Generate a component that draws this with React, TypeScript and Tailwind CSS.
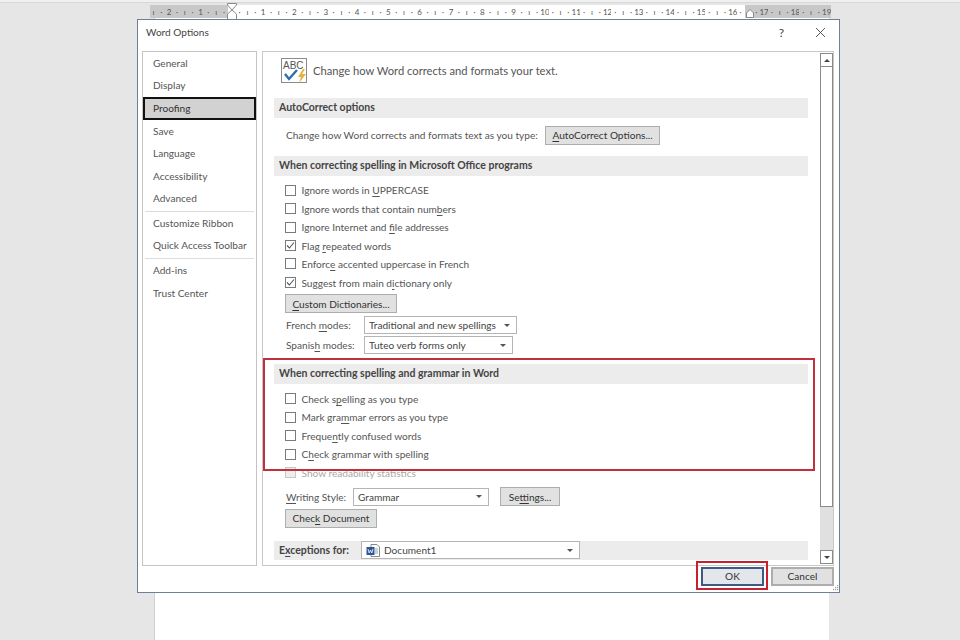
import React from "react";

const U = ({ children }: { children: React.ReactNode }) => <span className="underline underline-offset-2 decoration-1">{children}</span>;

function Check({ label, checked, dim }: { label: React.ReactNode; checked?: boolean; dim?: boolean }) {
  return (
    <div className={`flex h-[18.45px] items-center gap-[5px] whitespace-nowrap pl-[11px] ${dim ? "text-[#a8a8a8]" : ""}`}>
      <span className={`flex h-[11px] w-[11px] items-center justify-center border ${dim ? "border-[#c8c8c8] bg-[#eee]" : "border-[#7a7a7a] bg-white"}`}>
        {checked && (
          <svg width="9" height="9" viewBox="0 0 9 9" fill="none" stroke="#555" strokeWidth="1.1"><path d="M1 4.5 L3.4 7 L8 1.5" /></svg>
        )}
      </span>
      <span className="ml-[0.5px] pt-[1.5px]">{label}</span>
    </div>
  );
}

function Btn({ children, className = "" }: { children: React.ReactNode; className?: string }) {
  return <div className={`flex h-[19px] items-center justify-center whitespace-nowrap border border-[#adadad] bg-[#e1e1e1] pt-[1px] ${className}`}>{children}</div>;
}

function Select({ children, className = "" }: { children: React.ReactNode; className?: string }) {
  return (
    <div className={`flex h-[18px] items-center justify-between whitespace-nowrap border border-[#b5b5b5] bg-white pl-[4px] pr-[6px] ${className}`}>
      <span className="flex items-center pt-[1px]">{children}</span>
      <span className="h-0 w-0 border-x-[3px] border-t-[3px] border-x-transparent border-t-[#555]" />
    </div>
  );
}

function Heading({ children }: { children: React.ReactNode }) {
  return <div className="flex h-[20px] items-center whitespace-nowrap bg-[#ececec] pl-[5px] text-[10.5px] font-bold text-[#444]">{children}</div>;
}

function Ruler() {
  const slots = Array.from({ length: 87 }, (_, i) => i - 10);
  return (
    <div className="relative mt-[2px] ml-[152px] h-[13px] w-[679px] text-[8px] text-[#555]">
      <div className="-ml-[2.4px] flex h-full w-[681.4px] overflow-hidden">
        {slots.map(k => {
          const shade = k < 0 || k > 65 ? "bg-[#c8c8c8]" : "bg-white";
          const glyph = k === 0 ? "" : k % 4 === 0 ? String(Math.abs(k) / 4) : k % 2 === 0 ? "ı" : "·";
          return (
            <span key={k} className={`flex h-full w-[7.83px] shrink-0 items-center justify-center overflow-visible whitespace-nowrap ${shade}`}>{glyph}</span>
          );
        })}
      </div>
      <svg width="10" height="17" viewBox="0 0 10 17" className="absolute left-[75px] -top-[2px]">
        <path d="M0.5 0.5 H9.5 V2 L5 7 L0.5 2 Z M5 7 L9.5 11 V16.5 H0.5 V11 Z" fill="#fff" stroke="#8a8a8a" />
      </svg>
      <svg width="8" height="9" viewBox="0 0 8 9" className="absolute left-[594px] top-[4px]">
        <path d="M4 0.5 L7.5 4 V8.5 H0.5 V4 Z" fill="#fff" stroke="#8a8a8a" />
      </svg>
    </div>
  );
}

const topNav = ["General", "Display", "Proofing", "Save", "Language", "Accessibility", "Advanced"];

function NavItem({ label, active }: { label: string; active?: boolean }) {
  return (
    <div className={`flex h-[22.6px] items-center whitespace-nowrap ${active ? "border-2 border-[#111] bg-[#d2d2d2] pl-[8px] text-[#333]" : "pl-[10px]"}`}>{label}</div>
  );
}

export default function App() {
  return (
    <div className="relative h-[640px] w-[960px] overflow-hidden bg-[#e6e6e6] text-[10.1px] text-[#555] [font-family:'Lato','Noto_Sans',sans-serif]">
      <div className="h-[2px] bg-[#f0f0f0]" />
      <div className="h-[1px] bg-[#d8d8d8]" />
      <Ruler />
      <div className="ml-[154px] h-[640px] w-[675px] border-l border-[#d0d0d0] bg-white" />

      {/* dialog */}
      <div className="absolute left-[137px] top-[19px] flex h-[574px] w-[703px] flex-col border border-[#6f7f9a] bg-white">
        <div className="flex h-[31px] shrink-0 items-center justify-between pb-[6px] pl-[8px] pr-[13px] text-[#444]">
          <span>Word Options</span>
          <div className="flex items-center gap-[31px]">
            <span className="text-[12px]">?</span>
            <svg width="11" height="11" viewBox="0 0 11 11" stroke="#444" strokeWidth="0.9"><path d="M1 1 L10 10 M10 1 L1 10" /></svg>
          </div>
        </div>

        <div className="flex h-[515px] shrink-0 gap-[5px] pl-[4px] pr-[5px]">
          <div className="flex w-[115px] shrink-0 flex-col border border-[#c4c4c4]">
            {topNav.map(l => <NavItem key={l} label={l} active={l === "Proofing"} />)}
            <div className="mx-[2px] my-[0.5px] h-[1px] bg-[#dcdcdc]" />
            <NavItem label="Customize Ribbon" />
            <NavItem label="Quick Access Toolbar" />
            <div className="mx-[2px] my-[0.5px] h-[1px] bg-[#dcdcdc]" />
            <NavItem label="Add-ins" />
            <NavItem label="Trust Center" />
          </div>

          <div className="flex min-w-0 flex-1 border border-[#c8c8c8]">
            <div className="min-w-0 flex-1 overflow-hidden pl-[11px] pr-[12px]">
              <div className="flex h-[46px] items-start pl-[7px] pt-[6px]">
                <div className="flex items-center">
                  <svg width="27" height="26" viewBox="0 0 27 26" className="shrink-0">
                    <rect x="0.5" y="0.5" width="25" height="24" fill="#fff" stroke="#8a8a8a" />
                    <text x="2" y="11" fontSize="10" fill="#555" fontFamily="Liberation Sans">ABC</text>
                    <path d="M4 16 L8 21 L16 12" fill="none" stroke="#2a6fa8" strokeWidth="2.4" />
                    <path d="M22 11 L17 19 L20 19 L18 25 L25 16 L21 16 L24 11 Z" fill="#e8b23a" />
                  </svg>
                  <span className="ml-[5px] whitespace-nowrap text-[11.2px]">Change how Word corrects and formats your text.</span>
                </div>
              </div>

              <Heading>AutoCorrect options</Heading>
              <div className="flex h-[38px] items-center whitespace-nowrap pb-[3px] pl-[12px]">
                <span>Change how Word corrects and formats text as you type:</span>
                <Btn className="ml-auto mr-[148px] w-[115px] text-[#333]"><span><U>A</U>utoCorrect Options...</span></Btn>
              </div>

              <Heading>When correcting spelling in Microsoft Office programs</Heading>
              <div className="mt-[5px]">
                <Check label={<>Ignore words in <U>U</U>PPERCASE</>} />
                <Check label={<>Ignore words that contain num<U>b</U>ers</>} />
                <Check label={<>Ignore Internet and <U>f</U>ile addresses</>} />
                <Check checked label={<>Flag <U>r</U>epeated words</>} />
                <Check label={<>Enforc<U>e</U> accented uppercase in French</>} />
                <Check checked label={<>Suggest from main d<U>i</U>ctionary only</>} />
              </div>
              <Btn className="ml-[11px] mt-[2.5px] w-[112px] text-[#333]"><span><U>C</U>ustom Dictionaries...</span></Btn>
              <div className="mt-[2px] flex h-[20px] items-center whitespace-nowrap pl-[12px]">
                <span className="w-[78px] pt-[1px]">French <U>m</U>odes:</span>
                <Select className="w-[153px] text-[#444]">Traditional and new spellings</Select>
              </div>
              <div className="flex h-[20px] items-center whitespace-nowrap pl-[12px]">
                <span className="w-[78px] pt-[1px]">Spanis<U>h</U> modes:</span>
                <Select className="w-[149px] text-[#444]">Tuteo verb forms only</Select>
              </div>

              <div className="mt-[8.5px]"><Heading>When correcting spelling and grammar in Word</Heading></div>
              <div className="mt-[6px]">
                <Check label={<>Check s<U>p</U>elling as you type</>} />
                <Check label={<>Mark gra<U>m</U>mar errors as you type</>} />
                <Check label={<>Freque<U>n</U>tly confused words</>} />
                <Check label={<>C<U>h</U>eck grammar with spelling</>} />
                <Check dim label="Show readability statistics" />
              </div>
              <div className="mt-[4px] flex h-[22px] items-center whitespace-nowrap pl-[12px]">
                <span className="w-[67px] pt-[1px]"><U>W</U>riting Style:</span>
                <Select className="w-[136px] text-[#444]">Grammar</Select>
                <Btn className="ml-[11px] w-[60px] text-[#333]"><span>Se<U>t</U>tings...</span></Btn>
              </div>
              <Btn className="ml-[11px] mt-[1px] w-[92px] text-[#333]"><span>Chec<U>k</U> Document</span></Btn>

              <div className="mt-[13px] flex h-[19px] items-center whitespace-nowrap bg-[#ececec] pl-[5px]">
                <span className="w-[82px] pt-[1px] text-[10.5px] font-bold text-[#444]">E<U>x</U>ceptions for:</span>
                <Select className="w-[219px] text-[#444]">
                  <svg width="14" height="13" viewBox="0 0 14 13" className="mr-[4px]">
                    <path d="M5 0.5 H11 L13.5 3 V12.5 H5 Z" fill="#fff" stroke="#888" />
                    <rect x="0.5" y="3" width="8" height="8" fill="#2b5797" />
                    <path d="M9 5 H12 M9 7 H12 M9 9 H12" stroke="#8aa" />
                    <path d="M2 5 L3.2 9 L4.5 6 L5.8 9 L7 5" fill="none" stroke="#fff" strokeWidth="0.8" />
                  </svg>
                  Document1
                </Select>
              </div>
            </div>

            {/* scrollbar */}
            <div className="my-[1px] flex w-[13px] shrink-0 flex-col bg-[#e0e0e0]">
              <div className="flex h-[14px] items-center justify-center border border-[#8a8a8a] bg-white">
                <span className="h-0 w-0 border-x-[3px] border-b-[3px] border-x-transparent border-b-[#444]" />
              </div>
              <div className="h-[440px] border-x border-b border-[#8a8a8a] bg-white" />
              <div className="flex-1" />
              <div className="flex h-[14px] items-center justify-center border border-[#8a8a8a] bg-white">
                <span className="h-0 w-0 border-x-[3px] border-t-[3px] border-x-transparent border-t-[#444]" />
              </div>
            </div>
          </div>
        </div>

        <div className="relative flex flex-1 items-start justify-end gap-[7px] pr-[5px] pt-[1px] text-[#333]">
          <div className="flex h-[19px] w-[63px] items-center justify-center border-2 border-[#3f5a80] bg-[#e3e6ea] pt-[1px]">OK</div>
          <Btn className="w-[63px] border-2">Cancel</Btn>
          <svg width="6" height="6" viewBox="0 0 6 6" fill="#9a9a9a" className="absolute bottom-[1px] right-[0.5px]">
            <rect x="4" y="0" width="1.2" height="1.2" /><rect x="2" y="2" width="1.2" height="1.2" /><rect x="4" y="2" width="1.2" height="1.2" /><rect x="0" y="4" width="1.2" height="1.2" /><rect x="2" y="4" width="1.2" height="1.2" /><rect x="4" y="4" width="1.2" height="1.2" />
          </svg>
        </div>
      </div>

      {/* red highlights */}
      <div className="pointer-events-none absolute left-[263px] top-[358px] h-[113px] w-[552px] border-2 border-[#c0313c]" />
      <div className="pointer-events-none absolute left-[696px] top-[561px] h-[29px] w-[72px] border-2 border-[#c8202e]" />
    </div>
  );
}
